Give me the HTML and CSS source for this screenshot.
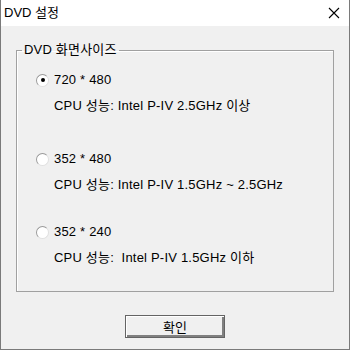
FILE: index.html
```html
<!DOCTYPE html>
<html>
  <head>
    <title>DVD 설정</title>
    <link rel="stylesheet" href="styles.css">
  </head>
  <body>
    <div class="window">
      <div class="titlebar">
        <span class="title">DVD 설정</span>
        <svg class="close" width="12" height="12" viewBox="0 0 12 12">
          <path d="M1 1 L11 11 M11 1 L1 11" stroke="#000" stroke-width="1.1" fill="none" />
        </svg>
      </div>
      <div class="content">
        <fieldset class="group">
          <legend>DVD 화면사이즈</legend>
          <div class="option first">
            <div class="radio-line">
              <span class="radio checked"></span>
              <span>720 * 480</span>
            </div>
            <div class="cpu">CPU 성능: Intel P-IV 2.5GHz 이상</div>
          </div>
          <div class="option second">
            <div class="radio-line">
              <span class="radio"></span>
              <span>352 * 480</span>
            </div>
            <div class="cpu">CPU 성능: Intel P-IV 1.5GHz ~ 2.5GHz</div>
          </div>
          <div class="option third">
            <div class="radio-line">
              <span class="radio"></span>
              <span>352 * 240</span>
            </div>
            <div class="cpu">CPU 성능:&nbsp; Intel P-IV 1.5GHz 이하</div>
          </div>
        </fieldset>
        <div class="actions">
          <button class="ok">확인</button>
        </div>
      </div>
    </div>
  </body>
</html>
```

FILE: styles.css
```css
body {
  margin: 0;
  font-family: "Liberation Sans", "Noto Sans CJK KR", sans-serif;
  font-size: 13px;
  color: #000;
  background: #f0f0f0;
}
.window {
  width: 350px;
  height: 350px;
  box-sizing: border-box;
  border: 1px solid #7a7a7a;
  border-top: none;
  background: #f0f0f0;
}
.titlebar {
  height: 26px;
  background: #fff;
  display: flex;
  align-items: center;
  justify-content: space-between;
  padding: 0 9px 0 3px;
}
.title {
  line-height: 16px;
  padding-bottom: 1px;
}
.close {
  display: block;
  margin-bottom: 1px;
}
.content {
  padding: 16px 0 0 15px;
}
.group {
  margin: 0;
  padding: 0 0 0 19px;
  width: 318px;
  height: 250px;
  box-sizing: border-box;
  border: 1px solid #a0a0a0;
  box-shadow: inset 1px 1px #fff;
  letter-spacing: 0.2px;
}
.group legend {
  margin-left: -14px;
  padding: 0 2px;
  line-height: 16px;
}
.option.first {
  margin-top: 14px;
}
.option.second {
  margin-top: 37px;
}
.option.third {
  margin-top: 31px;
}
.radio-line {
  display: flex;
  align-items: center;
  gap: 5px;
  line-height: 16px;
}
.radio {
  width: 11px;
  height: 11px;
  border-radius: 50%;
  border: 1px solid #9a9a9a;
  border-right-color: #e0e0e0;
  border-bottom-color: #e0e0e0;
  background: #fff;
  display: flex;
  align-items: center;
  justify-content: center;
}
.radio.checked::after {
  content: "";
  width: 4px;
  height: 4px;
  border-radius: 50%;
  background: #000;
}
.cpu {
  margin: 10px 0 0 18px;
  line-height: 16px;
}
.actions {
  display: flex;
  justify-content: center;
  margin-top: 23px;
  padding-right: 15px;
}
.ok {
  width: 100px;
  height: 23px;
  font-family: inherit;
  font-size: 13px;
  background: #f0f0f0;
  border: 1px solid #646464;
  box-shadow: inset 1px 1px #fff, inset -2px -2px #808080;
  padding: 0;
}
```
